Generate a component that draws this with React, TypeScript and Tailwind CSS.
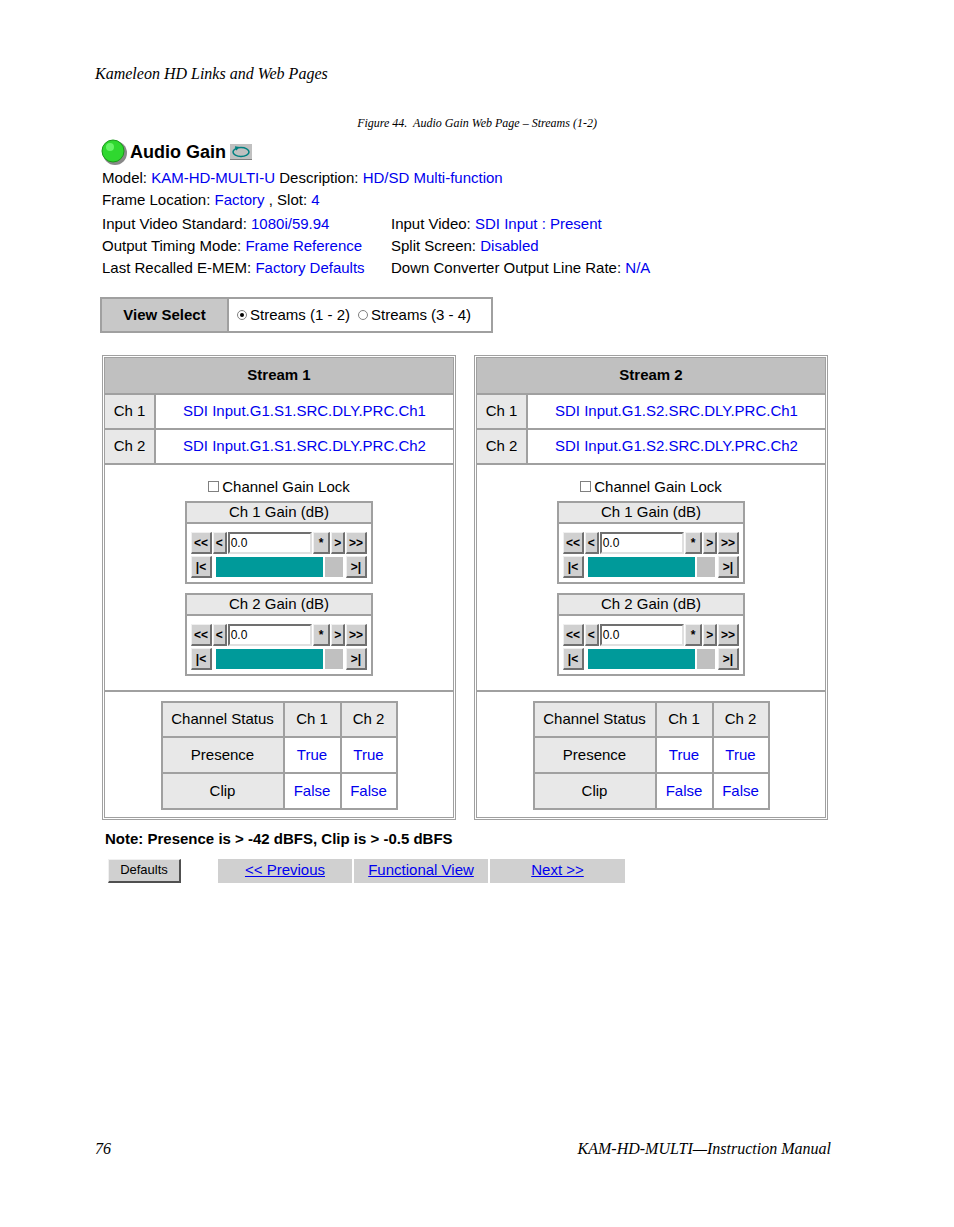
import React from "react";

const B = "text-[#0000ee]";

function Btn({ children, w }: { children: React.ReactNode; w: string }) {
  return (
    <div className={`${w} h-[22px] bg-[#d0d0d0] border-t border-l border-t-[#f0f0f0] border-l-[#f0f0f0] border-r-2 border-b-2 border-r-[#707070] border-b-[#707070] flex items-center justify-center text-[12px] font-bold leading-none`}>
      {children}
    </div>
  );
}

function Gain({ label }: { label: string }) {
  return (
    <div className="w-[188px] border-2 border-[#a0a0a0] bg-white">
      <div className="h-[21px] bg-[#e8e8e8] border-b-2 border-[#a0a0a0] flex items-center justify-center text-[15px]">{label}</div>
      <div className="px-[4px] pt-[8px] pb-[4px] flex flex-col gap-[2px]">
        <div className="flex gap-[1px]">
          <Btn w="w-[21px]">&lt;&lt;</Btn>
          <Btn w="w-[14px]">&lt;</Btn>
          <div className="w-[85px] h-[22px] border-2 border-t-[#707070] border-l-[#707070] border-r-[#e0e0e0] border-b-[#e0e0e0] text-[12px] flex items-center pl-[1px]">0.0</div>
          <Btn w="w-[18px]">*</Btn>
          <Btn w="w-[14px]">&gt;</Btn>
          <Btn w="w-[21px]">&gt;&gt;</Btn>
        </div>
        <div className="flex items-center">
          <Btn w="w-[21px]">|&lt;</Btn>
          <div className="ml-[4px] w-[107px] h-[20px] bg-[#009a9a]" />
          <div className="ml-[2px] w-[18px] h-[20px] bg-[#c0c0c0]" />
          <div className="ml-auto"><Btn w="w-[21px]">&gt;|</Btn></div>
        </div>
      </div>
    </div>
  );
}

function Stream({ n, s }: { n: number; s: string }) {
  const cell = "border border-[#a0a0a0]";
  return (
    <div className="w-[354px] border border-[#a0a0a0] p-[1px] flex flex-col">
      <div className={`h-[37px] bg-[#c0c0c0] ${cell} flex items-center justify-center font-bold text-[15px]`}>Stream {n}</div>
      {[1, 2].map((c) => (
        <div key={c} className="flex h-[35px]">
          <div className={`w-[51px] bg-[#e8e8e8] ${cell} flex items-center justify-center text-[15px]`}>Ch {c}</div>
          <div className={`flex-1 ${cell} flex items-center justify-center text-[15px] ${B}`}>SDI Input.G1.{s}.SRC.DLY.PRC.Ch{c}</div>
        </div>
      ))}
      <div className={`${cell} h-[227px] flex flex-col items-center pt-[14px]`}>
        <div className="flex items-center gap-[3px] text-[15px] leading-none mb-[7px]">
          <span className="w-[11px] h-[11px] border border-[#808080] inline-block" />Channel Gain Lock
        </div>
        <Gain label="Ch 1 Gain (dB)" />
        <div className="h-[9px]" />
        <Gain label="Ch 2 Gain (dB)" />
      </div>
      <div className={`${cell} h-[127px] flex justify-center pt-[9px]`}>
        <div className="grid grid-cols-[122px_57px_56px] grid-rows-[35px_36px_36px] border border-[#a0a0a0] h-fit text-[15px]">
          {[
            ["Channel Status", "Ch 1", "Ch 2", false],
            ["Presence", "True", "True", true],
            ["Clip", "False", "False", true],
          ].map(([a, b, c, blue], i) => (
            <React.Fragment key={i}>
              <div className={`${cell} bg-[#e8e8e8] flex items-center justify-center`}>{a}</div>
              <div className={`${cell} flex items-center justify-center ${blue ? "bg-white " + B : "bg-[#e8e8e8]"}`}>{b}</div>
              <div className={`${cell} flex items-center justify-center ${blue ? "bg-white " + B : "bg-[#e8e8e8]"}`}>{c}</div>
            </React.Fragment>
          ))}
        </div>
      </div>
    </div>
  );
}

export default function App() {
  return (
    <div className="w-[954px] h-[1227px] bg-white relative text-black" style={{ fontFamily: '"Liberation Sans", Arial, sans-serif' }}>
      <div className="pl-[95px] pt-[62px] italic text-[16px]" style={{ fontFamily: '"Liberation Serif", serif' }}>Kameleon HD Links and Web Pages</div>
      <div className="text-center italic text-[12px] mt-[28px] pl-[-0px]" style={{ fontFamily: '"Liberation Serif", serif' }}>Figure 44.&nbsp; Audio Gain Web Page – Streams (1-2)</div>
      <div className="pl-[100px] mt-[6px]">
        <div className="flex items-center h-[28px]">
          <svg width="28" height="28" viewBox="0 0 28 28">
            <circle cx="15" cy="15" r="12" fill="#888" />
            <circle cx="13" cy="13" r="11" fill="#2fd82f" stroke="#1a9a1a" />
            <circle cx="10" cy="9" r="4" fill="#7fff7f" opacity="0.7" />
          </svg>
          <span className="ml-[2px] font-bold text-[18px]">Audio Gain</span>
          <svg className="ml-[4px]" width="22" height="16" viewBox="0 0 22 16">
            <rect x="0" y="0" width="22" height="16" fill="#c0c0c0" />
            <line x1="0" y1="15.5" x2="22" y2="15.5" stroke="#808080" />
            <ellipse cx="11" cy="8" rx="8" ry="4.5" fill="none" stroke="#008080" strokeWidth="1.5" />
            <path d="M5 3 L8 3.5 L6 6" fill="none" stroke="#008080" strokeWidth="1.5" />
          </svg>
        </div>
        <div className="text-[15px] leading-[22px] mt-[1px] pl-[2px]">
          <div>Model: <span className={B}>KAM-HD-MULTI-U</span> Description: <span className={B}>HD/SD Multi-function</span></div>
          <div>Frame Location: <span className={B}>Factory</span> , Slot: <span className={B}>4</span></div>
          <div className="grid grid-cols-[289px_auto] mt-[2px]">
            <div>Input Video Standard: <span className={B}>1080i/59.94</span></div>
            <div>Input Video: <span className={B}>SDI Input : Present</span></div>
            <div>Output Timing Mode: <span className={B}>Frame Reference</span></div>
            <div>Split Screen: <span className={B}>Disabled</span></div>
            <div>Last Recalled E-MEM: <span className={B}>Factory Defaults</span></div>
            <div>Down Converter Output Line Rate: <span className={B}>N/A</span></div>
          </div>
        </div>
        <div className="mt-[18px] flex w-[393px] h-[36px] border-2 border-[#a0a0a0]">
          <div className="w-[127px] bg-[#c8c8c8] border-r-2 border-[#a0a0a0] flex items-center justify-center font-bold text-[15px]">View Select</div>
          <div className="flex items-center pl-[8px] text-[15px] gap-[3px]">
            <span className="w-[10px] h-[10px] rounded-full border border-[#808080] inline-flex items-center justify-center"><span className="w-[4px] h-[4px] rounded-full bg-black" /></span>
            Streams (1 - 2)
            <span className="ml-[5px] w-[10px] h-[10px] rounded-full border border-[#808080] inline-block" />
            Streams (3 - 4)
          </div>
        </div>
        <div className="mt-[22px] pl-[2px] flex gap-[18px]">
          <Stream n={1} s="S1" />
          <Stream n={2} s="S2" />
        </div>
        <div className="pl-[5px] mt-[8px] font-bold text-[15px]">Note: Presence is &gt; -42 dBFS, Clip is &gt; -0.5 dBFS</div>
        <div className="flex items-center mt-[8px] pl-[8px]">
          <div className="w-[73px] h-[24px] bg-[#d0d0d0] border-t border-l border-[#f0f0f0] border-r-2 border-b-2 border-r-[#505050] border-b-[#505050] flex items-center justify-center text-[13px]">Defaults</div>
          <div className="ml-[37px] flex gap-[2px] text-[15px]">
            <div className="w-[134px] h-[24px] bg-[#d0d0d0] flex items-center justify-center"><span className={`${B} underline`}>&lt;&lt; Previous</span></div>
            <div className="w-[134px] h-[24px] bg-[#d0d0d0] flex items-center justify-center"><span className={`${B} underline`}>Functional View</span></div>
            <div className="w-[135px] h-[24px] bg-[#d0d0d0] flex items-center justify-center"><span className={`${B} underline`}>Next &gt;&gt;</span></div>
          </div>
        </div>
      </div>
      <div className="absolute left-[95px] right-[123px] top-[1137px] flex justify-between italic text-[16px]" style={{ fontFamily: '"Liberation Serif", serif' }}>
        <span>76</span><span>KAM-HD-MULTI—Instruction Manual</span>
      </div>
    </div>
  );
}
